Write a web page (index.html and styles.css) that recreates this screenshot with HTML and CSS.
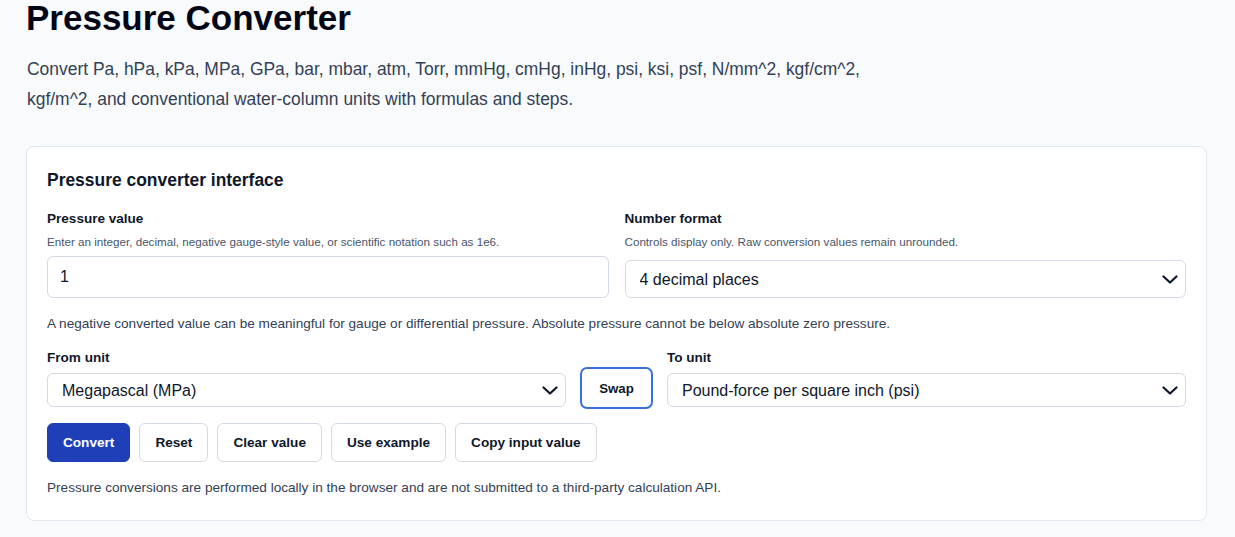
FILE: index.html
```html
<!DOCTYPE html>
<html lang="en">

<head>
    <meta charset="UTF-8">
    <meta name="viewport" content="width=device-width, initial-scale=1.0">
    <title>Pressure Converter</title>
    <link rel="stylesheet" href="styles.css">
</head>

<body>

    <main class="page">
        <h1 class="title">Pressure Converter</h1>
        <p class="intro">Convert Pa, hPa, kPa, MPa, GPa, bar, mbar, atm, Torr, mmHg, cmHg, inHg, psi, ksi, psf, N/mm^2, kgf/cm^2,<br>kgf/m^2, and conventional water-column units with formulas and steps.</p>

        <section class="card">
            <h2 class="card-title">Pressure converter interface</h2>

            <div class="field-row">
                <div class="field">
                    <label class="label" for="value">Pressure value</label>
                    <div class="hint">Enter an integer, decimal, negative gauge-style value, or scientific notation such as 1e6.</div>
                    <input class="text-input" id="value" type="text" value="1">
                </div>
                <div class="field">
                    <label class="label" for="format">Number format</label>
                    <div class="hint">Controls display only. Raw conversion values remain unrounded.</div>
                    <div class="select-wrap select-offset">
                        <select class="select select-tall" id="format">
                            <option>4 decimal places</option>
                        </select>
                        <svg class="chevron" width="16" height="9" viewBox="0 0 16 9"><path d="M1.5 1.5 L8 7.5 L14.5 1.5" fill="none" stroke="#0f172a" stroke-width="2.2" stroke-linecap="round" stroke-linejoin="round"/></svg>
                    </div>
                </div>
            </div>

            <p class="note">A negative converted value can be meaningful for gauge or differential pressure. Absolute pressure cannot be below absolute zero pressure.</p>

            <div class="unit-row">
                <div class="field">
                    <label class="label" for="from">From unit</label>
                    <div class="select-wrap">
                        <select class="select" id="from">
                            <option>Megapascal (MPa)</option>
                        </select>
                        <svg class="chevron" width="16" height="9" viewBox="0 0 16 9"><path d="M1.5 1.5 L8 7.5 L14.5 1.5" fill="none" stroke="#0f172a" stroke-width="2.2" stroke-linecap="round" stroke-linejoin="round"/></svg>
                    </div>
                </div>
                <button class="btn swap-btn">Swap</button>
                <div class="field">
                    <label class="label" for="to">To unit</label>
                    <div class="select-wrap">
                        <select class="select" id="to">
                            <option>Pound-force per square inch (psi)</option>
                        </select>
                        <svg class="chevron" width="16" height="9" viewBox="0 0 16 9"><path d="M1.5 1.5 L8 7.5 L14.5 1.5" fill="none" stroke="#0f172a" stroke-width="2.2" stroke-linecap="round" stroke-linejoin="round"/></svg>
                    </div>
                </div>
            </div>

            <div class="actions">
                <button class="btn btn-primary">Convert</button>
                <button class="btn">Reset</button>
                <button class="btn">Clear value</button>
                <button class="btn">Use example</button>
                <button class="btn">Copy input value</button>
            </div>

            <p class="note footnote">Pressure conversions are performed locally in the browser and are not submitted to a third-party calculation API.</p>
        </section>
    </main>

</body>

</html>
```

FILE: styles.css
```css
body {
    font-family: "Liberation Sans", Arial, sans-serif;
    background-color: #f8fafc;
    color: #0f172a;
    margin: 0;
    padding: 0;
}

.page {
    padding: 0 28px 0 26px;
}

.title {
    font-size: 35px;
    line-height: 36px;
    font-weight: 700;
    margin: 0;
    color: #020617;
}

.intro {
    font-size: 17.45px;
    line-height: 30px;
    color: #334155;
    margin: 18px 0 32px 1px;
}

.card {
    background-color: #fff;
    border: 1px solid #e2e8f0;
    border-radius: 8px;
    padding: 20px 20px 23px;
}

.card-title {
    font-size: 17.45px;
    line-height: 26px;
    font-weight: 700;
    margin: 0 0 18px;
}

.field-row {
    display: grid;
    grid-template-columns: 1fr 1fr;
    gap: 16px;
    align-items: start;
}

.field {
    display: flex;
    flex-direction: column;
}

.label {
    font-size: 13.55px;
    line-height: 16px;
    font-weight: 700;
    margin-bottom: 7px;
}

.hint {
    font-size: 11.65px;
    line-height: 16px;
    color: #475569;
    margin-bottom: 6px;
}

.text-input,
.select {
    box-sizing: border-box;
    width: 100%;
    font-family: inherit;
    font-size: 16px;
    color: #0f172a;
    background-color: #fff;
    border: 1px solid #d3dae3;
    border-radius: 6px;
    padding: 0 14px;
    margin: 0;
}

.text-input {
    height: 42px;
    padding-left: 12px;
}

.select {
    height: 34px;
    appearance: none;
    -webkit-appearance: none;
    padding-right: 40px;
}

.select-tall {
    height: 38px;
}

.select-wrap {
    position: relative;
}

.select-offset {
    margin-top: 4px;
}

.chevron {
    position: absolute;
    right: 8px;
    top: 50%;
    margin-top: -4px;
    pointer-events: none;
}

.note {
    font-size: 13.6px;
    line-height: 18px;
    color: #334155;
    margin: 17px 0 17px;
}

.unit-row {
    display: grid;
    grid-template-columns: 1fr auto 1fr;
    gap: 14px;
    align-items: end;
}

.unit-row .select-wrap {
    margin-bottom: 2px;
}

.btn {
    font-family: inherit;
    font-size: 13.6px;
    font-weight: 700;
    color: #0f172a;
    background-color: #fff;
    border: 1px solid #d3dae3;
    border-radius: 6px;
    height: 39px;
    padding: 0 15px;
    cursor: pointer;
}

.swap-btn {
    height: 42px;
    width: 73px;
    font-size: 13.3px;
    border: 2px solid #3b6fe0;
    border-radius: 7px;
}

.actions {
    display: flex;
    gap: 9px;
    margin-top: 14px;
}

.btn-primary {
    background-color: #1e3fb8;
    border-color: #1e3fb8;
    color: #fff;
}

.footnote {
    margin: 17px 0 0;
}
```
